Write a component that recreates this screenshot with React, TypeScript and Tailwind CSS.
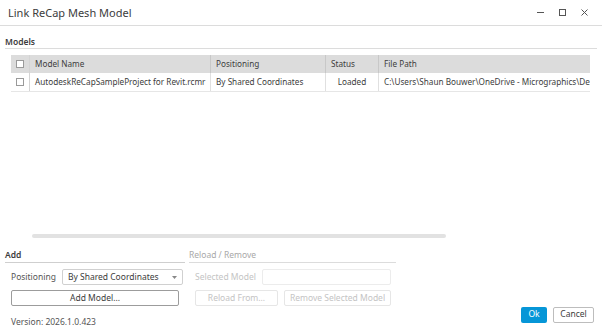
import React from "react";

const font = { fontFamily: '"Noto Sans", "Open Sans", sans-serif' };

interface Column {
  label: string;
  width: string;
}

const columns: Column[] = [
  { label: "Model Name", width: "w-[181px]" },
  { label: "Positioning", width: "w-[115px]" },
  { label: "Status", width: "w-[53px]" },
  { label: "File Path", width: "flex-1" },
];

const rowCells = [
  { text: "AutodeskReCapSampleProject for Revit.rcmr", width: "w-[181px]", align: "" },
  { text: "By Shared Coordinates", width: "w-[115px]", align: "" },
  { text: "Loaded", width: "w-[53px]", align: "justify-center" },
  { text: "C:\\Users\\Shaun Bouwer\\OneDrive - Micrographics\\Des", width: "flex-1", align: "" },
];

const Check = () => (
  <div className="w-[19px] shrink-0 flex items-center justify-center border-r border-[#d4d4d4] h-full">
    <div className="w-[8px] h-[8px] border border-[#9a9a9a] bg-white" />
  </div>
);

const TitleBar = () => (
  <div className="h-[26px] shrink-0 flex items-center justify-between border-b border-[#dcdcdc] pl-[8px] pr-[14px]">
    <span className="text-[11px] text-[#3c3c3c] pt-[1px]">Link ReCap Mesh Model</span>
    <div className="flex items-center gap-[15px] text-[#555]">
      <svg width="7" height="7" viewBox="0 0 7 7"><path d="M0 3.5h7" stroke="currentColor" strokeWidth="1" /></svg>
      <svg width="7" height="7" viewBox="0 0 7 7"><rect x="0.5" y="0.5" width="6" height="6" fill="none" stroke="currentColor" strokeWidth="1" /></svg>
      <svg width="7" height="7" viewBox="0 0 7 7"><path d="M0.5 0.5l6 6M6.5 0.5l-6 6" stroke="currentColor" strokeWidth="1" /></svg>
    </div>
  </div>
);

const ModelTable = () => (
  <div className="ml-[11px] w-[579px] text-[8.2px] text-[#3c3c3c]">
    <div className="h-[18px] flex items-center bg-[#dcdcdc]">
      <Check />
      {columns.map((c, i) => (
        <div
          key={c.label}
          className={`${c.width} h-full flex items-center px-[5px] ${i < columns.length - 1 ? "border-r border-[#c8c8c8]" : ""}`}
        >
          {c.label}
        </div>
      ))}
    </div>
    <div className="h-[19px] flex items-center border-b border-[#e6e6e6]">
      <Check />
      {rowCells.map((c, i) => (
        <div
          key={i}
          className={`${c.width} ${c.align} h-full flex items-center px-[5px] whitespace-nowrap overflow-hidden ${i < rowCells.length - 1 ? "border-r border-[#e0e0e0]" : ""}`}
        >
          {c.text}
        </div>
      ))}
    </div>
  </div>
);

export default function App() {
  return (
    <div className="w-[602px] h-[334px] bg-white flex flex-col overflow-hidden" style={font}>
      <TitleBar />
      <div className="mt-[10px] mx-[5px] h-[12px] flex items-center text-[8.5px] font-semibold text-[#3c3c3c]">Models</div>
      <div className="mx-[5px] border-b border-[#dcdcdc]" />
      <div className="mt-[6px] h-[185px] flex flex-col">
        <ModelTable />
        <div className="mt-auto ml-[32px] w-[414px] h-[4px] rounded-full bg-[#e2e2e2] mb-[2px]" />
      </div>

      <div className="mt-[9px] flex px-[5px] gap-[4px] text-[8.5px]">
        <div className="w-[180px] flex flex-col">
          <div className="h-[12px] flex items-center font-semibold text-[#3c3c3c] border-b border-[#cfcfcf] pb-[1px] box-content">Add</div>
          <div className="mt-[6px] flex items-center pl-[6px] gap-[6px]">
            <span className="text-[#555]">Positioning</span>
            <div className="w-[121px] h-[16px] border border-[#d0d0d0] rounded-[2px] flex items-center justify-between px-[5px] text-[#3c3c3c]">
              <span>By Shared Coordinates</span>
              <svg width="5" height="3" viewBox="0 0 5 3"><path d="M0 0h5L2.5 3z" fill="#888" /></svg>
            </div>
          </div>
          <div className="mt-[5px] ml-[6px] w-[168px] h-[16px] border border-[#9c9c9c] rounded-[2px] flex items-center justify-center text-[#3c3c3c]">
            Add Model...
          </div>
          <div className="mt-[10px] ml-[6px] text-[#555]">Version: 2026.1.0.423</div>
        </div>

        <div className="w-[207px] flex flex-col text-[#c4c4c4]">
          <div className="h-[12px] flex items-center text-[#a8a8a8] border-b border-[#dcdcdc] pb-[1px] box-content">Reload / Remove</div>
          <div className="mt-[6px] flex items-center pl-[6px] gap-[6px]">
            <span>Selected Model</span>
            <div className="w-[129px] h-[16px] border border-[#ececec] rounded-[2px]" />
          </div>
          <div className="mt-[5px] ml-[6px] flex gap-[6px]">
            <div className="w-[83px] h-[16px] border border-[#e6e6e6] rounded-[2px] flex items-center justify-center">Reload From...</div>
            <div className="w-[107px] h-[16px] border border-[#e6e6e6] rounded-[2px] flex items-center justify-center">Remove Selected Model</div>
          </div>
        </div>

        <div className="flex-1 flex items-end justify-end gap-[6px] pr-[3px] pb-[6px]">
          <div className="w-[26px] h-[16px] bg-[#0696d7] text-white rounded-[2px] flex items-center justify-center">Ok</div>
          <div className="w-[41px] h-[16px] border border-[#bdbdbd] rounded-[2px] text-[#3c3c3c] flex items-center justify-center">Cancel</div>
        </div>
      </div>
    </div>
  );
}
